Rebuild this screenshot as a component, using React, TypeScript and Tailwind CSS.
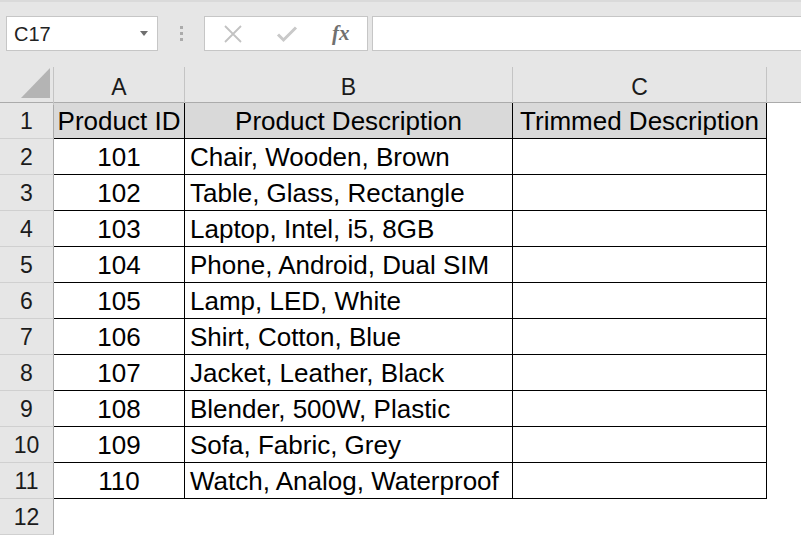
import React from "react";

const rows = [
  ["101", "Chair, Wooden, Brown"],
  ["102", "Table, Glass, Rectangle"],
  ["103", "Laptop, Intel, i5, 8GB"],
  ["104", "Phone, Android, Dual SIM"],
  ["105", "Lamp, LED, White"],
  ["106", "Shirt, Cotton, Blue"],
  ["107", "Jacket, Leather, Black"],
  ["108", "Blender, 500W, Plastic"],
  ["109", "Sofa, Fabric, Grey"],
  ["110", "Watch, Analog, Waterproof"],
];

const grid = "grid grid-cols-[54px_131px_328px_254px_1fr]";
const font = "font-['Liberation_Sans',Arial,sans-serif]";

function RowHead({ n }: { n: number }) {
  return (
    <div className="h-[36px] bg-[#e6e6e6] border-r border-r-[#ababab] border-b border-b-[#d0d0d0] flex items-center justify-center pt-[2px] text-[23px] text-[#1b1b1b]">
      {n}
    </div>
  );
}

export default function App() {
  return (
    <div className={`w-[801px] h-[535px] overflow-hidden bg-white ${font}`}>
      {/* formula bar */}
      <div className="h-[67px] bg-[#e6e6e6] border-t-2 border-t-[#dadada] flex items-start pt-[14px] pl-[6px]">
        <div className="w-[152px] h-[35px] bg-white border border-[#c6c6c6] flex items-center justify-between pl-[7px] pr-[9px]">
          <span className="text-[20px] text-[#222] pt-[1px]">C17</span>
          <svg width="8" height="5" viewBox="0 0 8 5">
            <path d="M0 0h8L4 5z" fill="#6f6f6f" />
          </svg>
        </div>
        <div className="w-[46px] h-[35px] flex flex-col items-center justify-center gap-[3px]">
          <span className="w-[3px] h-[3px] bg-[#ababab]" />
          <span className="w-[3px] h-[3px] bg-[#ababab]" />
          <span className="w-[3px] h-[3px] bg-[#ababab]" />
        </div>
        <div className="w-[164px] h-[35px] bg-white border border-[#c6c6c6] flex items-center">
          <svg width="20" height="18" viewBox="0 0 20 18" className="ml-[18px]">
            <path d="M2 1l16 16M18 1L2 17" stroke="#c2c2c2" strokeWidth="1.8" />
          </svg>
          <svg width="22" height="18" viewBox="0 0 22 18" className="ml-[33px]">
            <path d="M2 9.5l5.5 5.5L20 2.5" stroke="#c9c9c9" strokeWidth="3" fill="none" />
          </svg>
          <span className="ml-[34px] font-['Liberation_Serif',serif] italic font-bold text-[21px] text-[#707070] leading-none">
            fx
          </span>
        </div>
        <div className="ml-[4px] flex-1 h-[35px] bg-white border border-[#c6c6c6] border-r-0" />
      </div>

      {/* column headers */}
      <div className={`${grid} h-[36px] bg-[#e6e6e6] border-b border-b-[#ababab] text-[23px] text-[#1b1b1b]`}>
        <div className="border-r border-r-[#c4c4c4] relative">
          <svg width="30" height="31" viewBox="0 0 30 31" className="absolute left-[21px] top-[1px]">
            <path d="M29 0v30H0z" fill="#b4b4b4" />
          </svg>
        </div>
        {["A", "B", "C"].map((c) => (
          <div key={c} className="border-r border-r-[#c4c4c4] flex items-center justify-center pt-[3px]">
            {c}
          </div>
        ))}
        <div />
      </div>

      {/* body */}
      <div className={`${grid} text-[26px] text-black`}>
        <RowHead n={1} />
        <div className="h-[36px] bg-[#d9d9d9] border-r border-b border-black flex items-center justify-center pt-[2px] whitespace-nowrap">
          Product ID
        </div>
        <div className="h-[36px] bg-[#d9d9d9] border-r border-b border-black flex items-center justify-center pt-[2px] whitespace-nowrap">
          Product Description
        </div>
        <div className="h-[36px] bg-[#d9d9d9] border-r border-b border-black flex items-center justify-center pt-[2px] whitespace-nowrap">
          Trimmed Description
        </div>
        <div />
        {rows.map(([id, desc], i) => (
          <React.Fragment key={id}>
            <RowHead n={i + 2} />
            <div className="h-[36px] border-r border-b border-black flex items-center justify-center pt-[2px]">{id}</div>
            <div className="h-[36px] border-r border-b border-black flex items-center pl-[5px] pt-[2px] whitespace-nowrap">
              {desc}
            </div>
            <div className="h-[36px] border-r border-b border-black" />
            <div />
          </React.Fragment>
        ))}
        <RowHead n={12} />
      </div>
    </div>
  );
}
